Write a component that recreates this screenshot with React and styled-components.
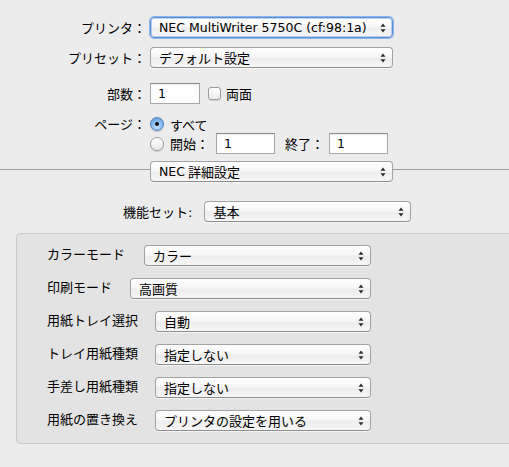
import React from "react";
import styled, { createGlobalStyle, css } from "styled-components";

const Global = createGlobalStyle`
  html, body { margin: 0; padding: 0; }
  body {
    background: #ececec;
    font-family: "DejaVu Sans", "Noto Sans CJK JP", sans-serif;
    font-size: 13px;
    color: #000;
    overflow: hidden;
  }
  #root { width: 509px; height: 467px; overflow: hidden; }
`;

const Page = styled.div`
  width: 509px;
  height: 467px;
  padding-top: 17px;
  box-sizing: border-box;
  display: flex;
  flex-direction: column;
  overflow: hidden;
`;

const Jp = styled.span`
  font-family: "Noto Sans CJK JP", sans-serif;
  font-size: 13px;
`;

const Latin = styled.span`
  font-family: "DejaVu Sans", sans-serif;
  font-size: 12.5px;
`;

const FormRow = styled.div`
  display: flex;
  align-items: ${(p) => (p.$top ? "flex-start" : "center")};
  margin-top: ${(p) => p.$mt || 0}px;
`;

const FormLabel = styled.div`
  width: 146px;
  margin-right: 4px;
  text-align: right;
  font-family: "Noto Sans CJK JP", sans-serif;
  font-size: 13px;
  line-height: ${(p) => p.$lh || 21}px;
  white-space: nowrap;
  flex: none;
`;

const PopupBox = styled.div`
  position: relative;
  box-sizing: border-box;
  height: 21px;
  width: ${(p) => (p.$w ? `${p.$w}px` : "auto")};
  flex: ${(p) => (p.$grow ? 1 : "none")};
  padding: 0 20px 0 8px;
  display: flex;
  align-items: center;
  border: 1px solid #a2a2a2;
  border-bottom-color: #8e8e8e;
  border-radius: 4px;
  background: linear-gradient(to bottom, #ffffff 0%, #f7f7f7 45%, #ededed 55%, #f6f6f6 100%);
  box-shadow: 0 1px 0 rgba(255, 255, 255, 0.6);
  white-space: nowrap;
  line-height: 19px;
  ${(p) =>
    p.$focused &&
    css`
      border-color: #5b8fd8;
      box-shadow: 0 0 0 1px #8db6ec, inset 0 0 0 1px rgba(140, 182, 236, 0.6);
    `}
`;

const Arrows = styled.svg`
  position: absolute;
  right: 6px;
  top: 50%;
  margin-top: -5px;
`;

function Popup({ children, w, grow, focused }) {
  return (
    <PopupBox $w={w} $grow={grow} $focused={focused}>
      {children}
      <Arrows width="6" height="10" viewBox="0 0 6 10">
        <path d="M0.5 3.8 L3 0.6 L5.5 3.8 Z" fill="#2a2a2a" />
        <path d="M0.5 6.2 L3 9.4 L5.5 6.2 Z" fill="#2a2a2a" />
      </Arrows>
    </PopupBox>
  );
}

const TextField = styled.div`
  box-sizing: border-box;
  width: ${(p) => p.$w}px;
  height: 21px;
  margin-left: ${(p) => p.$ml || 0}px;
  padding-left: 7px;
  display: flex;
  align-items: center;
  background: #fff;
  border: 1px solid #a8a8a8;
  border-top-color: #8c8c8c;
  box-shadow: inset 0 1px 1px rgba(0, 0, 0, 0.08);
  font-family: "DejaVu Sans", sans-serif;
  font-size: 12.5px;
  flex: none;
`;

const Checkbox = styled.span`
  box-sizing: border-box;
  width: 13px;
  height: 13px;
  margin-left: 8px;
  margin-right: 5px;
  border: 1px solid #9c9c9c;
  border-radius: 3px;
  background: linear-gradient(to bottom, #ffffff, #ececec);
  box-shadow: 0 1px 1px rgba(0, 0, 0, 0.12);
  flex: none;
`;

const Radio = styled.span`
  position: relative;
  box-sizing: border-box;
  width: 14px;
  height: 14px;
  margin-right: 6px;
  border-radius: 50%;
  flex: none;
  border: 1px solid ${(p) => (p.$on ? "#4f7fbf" : "#9a9a9a")};
  background: ${(p) =>
    p.$on
      ? "radial-gradient(circle at 50% 70%, #c9e3fb 0%, #8cbdf0 45%, #5d97dc 100%)"
      : "linear-gradient(to bottom, #ffffff, #e9e9e9)"};
  box-shadow: 0 1px 1px rgba(0, 0, 0, 0.15);
  ${(p) =>
    p.$on &&
    css`
      &::after {
        content: "";
        position: absolute;
        left: 4px;
        top: 4px;
        width: 4px;
        height: 4px;
        border-radius: 50%;
        background: #111;
      }
    `}
`;

const RadioGroup = styled.div`
  display: flex;
  flex-direction: column;
`;

const RadioRow = styled.div`
  display: flex;
  align-items: center;
  height: ${(p) => p.$h}px;
  margin-top: ${(p) => p.$mt || 0}px;
`;

const InlineText = styled.span`
  font-family: "Noto Sans CJK JP", sans-serif;
  font-size: 13px;
  margin-left: ${(p) => p.$ml || 0}px;
  white-space: nowrap;
`;

const SeparatorRow = styled.div`
  display: flex;
  align-items: flex-start;
  margin-top: 7px;
`;

const Rule = styled.div`
  height: 1px;
  margin-top: 8px;
  background: #9d9d9d;
  width: ${(p) => (p.$w ? `${p.$w}px` : "auto")};
  flex: ${(p) => (p.$w ? "none" : 1)};
`;

const FeatureRow = styled.div`
  display: flex;
  align-items: center;
  padding-left: 123px;
  margin-top: 19px;
`;

const FeatureLabel = styled.span`
  margin-right: 12px;
  white-space: nowrap;
`;

const GroupBox = styled.div`
  margin: 11px -20px 0 16px;
  padding: 11px 0 12px 30px;
  background: #e3e3e3;
  border: 1px solid #cbcbcb;
  border-radius: 4px;
  display: flex;
  flex-direction: column;
  gap: 12px;
`;

const GroupRow = styled.div`
  width: 324px;
  display: flex;
  align-items: center;
`;

const GroupLabel = styled.span`
  font-family: "Noto Sans CJK JP", sans-serif;
  font-size: 13px;
  margin-right: ${(p) => p.$gap}px;
  position: relative;
  top: -2px;
  white-space: nowrap;
  flex: none;
`;

const groupRows = [
  { label: "カラーモード", value: "カラー", gap: 19 },
  { label: "印刷モード", value: "高画質", gap: 18 },
  { label: "用紙トレイ選択", value: "自動", gap: 17 },
  { label: "トレイ用紙種類", value: "指定しない", gap: 17 },
  { label: "手差し用紙種類", value: "指定しない", gap: 17 },
  { label: "用紙の置き換え", value: "プリンタの設定を用いる", gap: 17 },
];

export default function App() {
  return (
    <>
      <Global />
      <Page>
        <FormRow>
          <FormLabel>プリンタ：</FormLabel>
          <Popup w={243} focused>
            <Latin>NEC MultiWriter 5750C (cf:98:1a)</Latin>
          </Popup>
        </FormRow>
        <FormRow $mt={9}>
          <FormLabel>プリセット：</FormLabel>
          <Popup w={243}>
            <Jp>デフォルト設定</Jp>
          </Popup>
        </FormRow>
        <FormRow $mt={15}>
          <FormLabel>部数：</FormLabel>
          <TextField $w={50}>1</TextField>
          <Checkbox />
          <InlineText>両面</InlineText>
        </FormRow>
        <FormRow $mt={13} $top>
          <FormLabel $lh={14}>ページ：</FormLabel>
          <RadioGroup>
            <RadioRow $h={14}>
              <Radio $on />
              <InlineText>すべて</InlineText>
            </RadioRow>
            <RadioRow $h={21} $mt={2}>
              <Radio />
              <InlineText>開始：</InlineText>
              <TextField $w={59} $ml={7}>1</TextField>
              <InlineText $ml={10}>終了：</InlineText>
              <TextField $w={59} $ml={5}>1</TextField>
            </RadioRow>
          </RadioGroup>
        </FormRow>
        <SeparatorRow>
          <Rule $w={150} />
          <Popup w={243}>
            <Latin>NEC</Latin>
            <Jp>&nbsp;詳細設定</Jp>
          </Popup>
          <Rule />
        </SeparatorRow>
        <FeatureRow>
          <FeatureLabel>
            <Jp>機能セット</Jp>:
          </FeatureLabel>
          <Popup w={207}>
            <Jp>基本</Jp>
          </Popup>
        </FeatureRow>
        <GroupBox>
          {groupRows.map((r) => (
            <GroupRow key={r.label}>
              <GroupLabel $gap={r.gap}>{r.label}</GroupLabel>
              <Popup grow>
                <Jp>{r.value}</Jp>
              </Popup>
            </GroupRow>
          ))}
        </GroupBox>
      </Page>
    </>
  );
}
